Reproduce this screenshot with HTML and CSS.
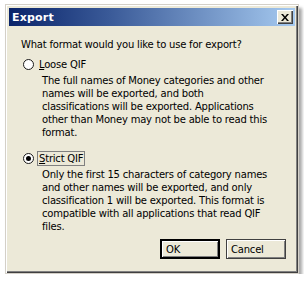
FILE: index.html
```html
<!DOCTYPE html>
<html>
<head>
    <meta charset="utf-8">
    <link rel="stylesheet" href="styles.css">
</head>
<body>
    <div class="window">
        <div class="titlebar">
            <div class="title">Export</div>
            <div class="close-btn">
                <svg width="8" height="7" viewBox="0 0 8 7">
                    <path d="M0 0h2l2 2.5L6 0h2L5 3.5 8 7H6L4 4.5 2 7H0l3-3.5z" fill="#000"/>
                </svg>
            </div>
        </div>

        <div class="content">
            <div class="question">What format would you like to use for export?</div>

            <div class="option">
                <span class="radio"></span>
                <span class="label"><u>L</u>oose QIF</span>
            </div>
            <div class="desc">
                The full names of Money categories and other<br>
                names will be exported, and both<br>
                classifications will be exported. Applications<br>
                other than Money may not be able to read this<br>
                format.
            </div>

            <div class="option option-second">
                <span class="radio checked"></span>
                <span class="label focused"><u>S</u>trict QIF</span>
            </div>
            <div class="desc">
                Only the first 15 characters of category names<br>
                and other names will be exported, and only<br>
                classification 1 will be exported. This format is<br>
                compatible with all applications that read QIF<br>
                files.
            </div>

            <div class="buttons">
                <button class="btn btn-default">OK</button>
                <button class="btn">Cancel</button>
            </div>
        </div>
    </div>
</body>
</html>
```

FILE: styles.css
```css
* {
    margin: 0;
    padding: 0;
    box-sizing: border-box;
}

body {
    background: #fff;
    font-family: 'DejaVu Sans', 'Liberation Sans', sans-serif;
    font-size: 10px;
    letter-spacing: -0.2px;
    color: #000;
    padding: 4px 0 0 5px;
}

.window {
    width: 294px;
    height: 270px;
    background: #ece9d8;
    border: 1px solid #d4d0c8;
    box-shadow: inset 1px 1px 0 #fff, inset -1px -1px 0 #404040, inset -2px -2px 0 #808080,
        3px 4px 3px rgba(0, 0, 0, 0.35);
    padding: 3px;
    display: flex;
    flex-direction: column;
}

.titlebar {
    height: 18px;
    background: linear-gradient(90deg, #0a246a 0%, #3a5a98 35%, #a6caf0 100%);
    display: flex;
    align-items: center;
    justify-content: space-between;
    padding: 0 2px 0 3px;
}

.title {
    color: #fff;
    font-weight: bold;
    font-size: 11px;
    letter-spacing: 0.2px;
}

.close-btn {
    width: 16px;
    height: 14px;
    background: #ece9d8;
    box-shadow: inset 1px 1px 0 #fff, inset -1px -1px 0 #404040, inset -2px -2px 0 #808080;
    display: flex;
    align-items: center;
    justify-content: center;
}

.content {
    padding: 12px 0 0 12px;
    display: flex;
    flex-direction: column;
}

.question {
    line-height: 13px;
}

.option {
    display: flex;
    align-items: center;
    gap: 4px;
    margin-top: 7px;
    margin-left: 2px;
    height: 13px;
}

.option-second {
    margin-top: 13px;
}

.radio {
    width: 11px;
    height: 11px;
    border-radius: 50%;
    background: #fff;
    border: 1px solid #1c1c1c;
    position: relative;
}

.radio.checked::after {
    content: '';
    position: absolute;
    left: 2px;
    top: 2px;
    width: 5px;
    height: 5px;
    border-radius: 50%;
    background: #000;
}

.label {
    padding: 0 1px;
    line-height: 13px;
}

.label.focused {
    outline: 1px solid #808080;
}

.desc {
    margin: 3px 0 0 21px;
    line-height: 13px;
}

.buttons {
    display: flex;
    justify-content: flex-end;
    gap: 6px;
    margin-top: 6px;
    padding-right: 9px;
}

.btn {
    width: 60px;
    height: 20px;
    font-family: inherit;
    font-size: 10px;
    letter-spacing: inherit;
    text-align: left;
    padding: 0 4px;
    background: #ece9d8;
    border: 1px solid #404040;
    box-shadow: inset 1px 1px 0 #fff, inset -1px -1px 0 #808080;
    color: #000;
}

.btn-default {
    border: 2px solid #000;
}
```
